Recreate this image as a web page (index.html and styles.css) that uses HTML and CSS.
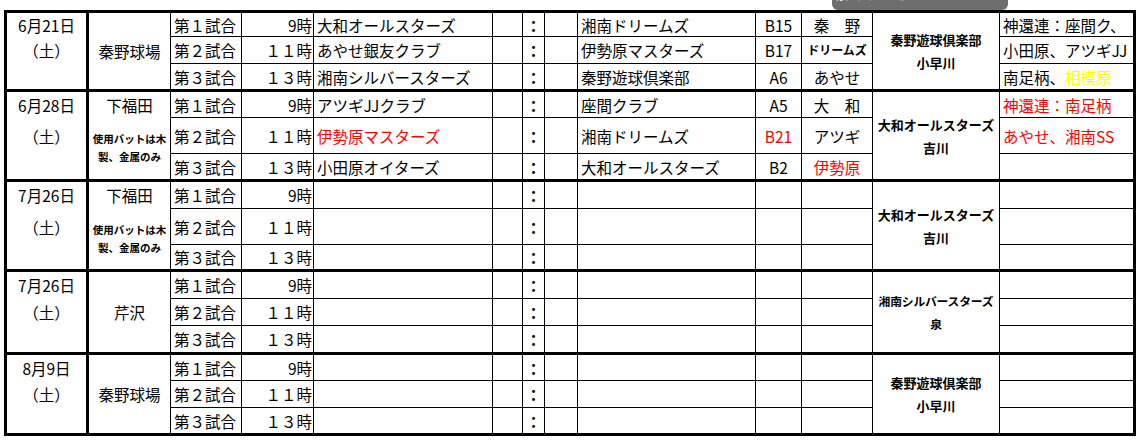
FILE: index.html
```html
<!DOCTYPE html>
<html lang="ja">
<head>
<meta charset="utf-8">
<title>日程表</title>
<link rel="stylesheet" href="styles.css">
</head>
<body>
<div class="sheet">
  <div class="tip">泉（2チーム）</div>
  <table class="grid">
    <colgroup>
      <col class="c-date"><col class="c-venue"><col class="c-game"><col class="c-time">
      <col class="c-team"><col class="c-sc1"><col class="c-colon"><col class="c-sc2">
      <col class="c-team2"><col class="c-field"><col class="c-ref"><col class="c-ump"><col class="c-note">
    </colgroup>
    <tbody>
      <!-- block 1 -->
      <tr class="first r25">
        <td class="date">6月21日</td>
        <td class="venue" rowspan="3">秦野球場</td>
        <td class="game">第１試合</td><td class="time">9時</td>
        <td class="team">大和オールスターズ</td><td></td><td class="colon">：</td><td></td>
        <td class="team">湘南ドリームズ</td><td class="field">B15</td><td class="ref">秦　野</td>
        <td class="ump" rowspan="3">秦野遊球倶楽部<br>小早川</td>
        <td class="note">神還連：座間ク、</td>
      </tr>
      <tr class="r27">
        <td class="date">（土）</td>
        <td class="game">第２試合</td><td class="time">１１時</td>
        <td class="team">あやせ銀友クラブ</td><td></td><td class="colon">：</td><td></td>
        <td class="team">伊勢原マスターズ</td><td class="field">B17</td><td class="ref small">ドリームズ</td>
        <td class="note">小田原、アツギJJ</td>
      </tr>
      <tr class="r27">
        <td class="date"></td>
        <td class="game">第３試合</td><td class="time">１３時</td>
        <td class="team">湘南シルバースターズ</td><td></td><td class="colon">：</td><td></td>
        <td class="team">秦野遊球倶楽部</td><td class="field">A6</td><td class="ref">あやせ</td>
        <td class="note">南足柄、<span class="yellow">相模原</span></td>
      </tr>
      <!-- block 2 -->
      <tr class="first r27">
        <td class="date">6月28日</td>
        <td class="venue venue-top">下福田</td>
        <td class="game">第１試合</td><td class="time">9時</td>
        <td class="team">アツギJJクラブ</td><td></td><td class="colon">：</td><td></td>
        <td class="team">座間クラブ</td><td class="field">A5</td><td class="ref">大　和</td>
        <td class="ump" rowspan="3">大和オールスターズ<br>吉川</td>
        <td class="note red">神還連：南足柄</td>
      </tr>
      <tr class="r36">
        <td class="date">（土）</td>
        <td class="venue venue-note" rowspan="2">使用バットは木<br>製、金属のみ</td>
        <td class="game">第２試合</td><td class="time">１１時</td>
        <td class="team red">伊勢原マスターズ</td><td></td><td class="colon">：</td><td></td>
        <td class="team">湘南ドリームズ</td><td class="field red">B21</td><td class="ref">アツギ</td>
        <td class="note red">あやせ、湘南SS</td>
      </tr>
      <tr class="r27">
        <td class="date"></td>
        <td class="game">第３試合</td><td class="time">１３時</td>
        <td class="team">小田原オイターズ</td><td></td><td class="colon">：</td><td></td>
        <td class="team">大和オールスターズ</td><td class="field">B2</td><td class="ref red">伊勢原</td>
        <td class="note"></td>
      </tr>
      <!-- block 3 -->
      <tr class="first r28">
        <td class="date">7月26日</td>
        <td class="venue venue-top">下福田</td>
        <td class="game">第１試合</td><td class="time">9時</td>
        <td class="team"></td><td></td><td class="colon">：</td><td></td>
        <td class="team"></td><td class="field"></td><td class="ref"></td>
        <td class="ump" rowspan="3">大和オールスターズ<br>吉川</td>
        <td class="note"></td>
      </tr>
      <tr class="r36">
        <td class="date">（土）</td>
        <td class="venue venue-note" rowspan="2">使用バットは木<br>製、金属のみ</td>
        <td class="game">第２試合</td><td class="time">１１時</td>
        <td class="team"></td><td></td><td class="colon">：</td><td></td>
        <td class="team"></td><td class="field"></td><td class="ref"></td>
        <td class="note"></td>
      </tr>
      <tr class="r26">
        <td class="date"></td>
        <td class="game">第３試合</td><td class="time">１３時</td>
        <td class="team"></td><td></td><td class="colon">：</td><td></td>
        <td class="team"></td><td class="field"></td><td class="ref"></td>
        <td class="note"></td>
      </tr>
      <!-- block 4 -->
      <tr class="first r28">
        <td class="date">7月26日</td>
        <td class="venue" rowspan="3">芹沢</td>
        <td class="game">第１試合</td><td class="time">9時</td>
        <td class="team"></td><td></td><td class="colon">：</td><td></td>
        <td class="team"></td><td class="field"></td><td class="ref"></td>
        <td class="ump ump-narrow" rowspan="3">湘南シルバースターズ<br>泉</td>
        <td class="note"></td>
      </tr>
      <tr class="r27">
        <td class="date">（土）</td>
        <td class="game">第２試合</td><td class="time">１１時</td>
        <td class="team"></td><td></td><td class="colon">：</td><td></td>
        <td class="team"></td><td class="field"></td><td class="ref"></td>
        <td class="note"></td>
      </tr>
      <tr class="r28">
        <td class="date"></td>
        <td class="game">第３試合</td><td class="time">１３時</td>
        <td class="team"></td><td></td><td class="colon">：</td><td></td>
        <td class="team"></td><td class="field"></td><td class="ref"></td>
        <td class="note"></td>
      </tr>
      <!-- block 5 -->
      <tr class="first r27">
        <td class="date">8月9日</td>
        <td class="venue" rowspan="3">秦野球場</td>
        <td class="game">第１試合</td><td class="time">9時</td>
        <td class="team"></td><td></td><td class="colon">：</td><td></td>
        <td class="team"></td><td class="field"></td><td class="ref"></td>
        <td class="ump" rowspan="3">秦野遊球倶楽部<br>小早川</td>
        <td class="note"></td>
      </tr>
      <tr class="r27">
        <td class="date">（土）</td>
        <td class="game">第２試合</td><td class="time">１１時</td>
        <td class="team"></td><td></td><td class="colon">：</td><td></td>
        <td class="team"></td><td class="field"></td><td class="ref"></td>
        <td class="note"></td>
      </tr>
      <tr class="r27">
        <td class="date"></td>
        <td class="game">第３試合</td><td class="time">１３時</td>
        <td class="team"></td><td></td><td class="colon">：</td><td></td>
        <td class="team"></td><td class="field"></td><td class="ref"></td>
        <td class="note"></td>
      </tr>
    </tbody>
  </table>
</div>
</body>
</html>
```

FILE: styles.css
```css
html, body {
  margin: 0;
  padding: 0;
  background: #fff;
}

body {
  font-family: "Noto Sans CJK JP", "Noto Sans", sans-serif;
  color: #000;
}

.sheet {
  position: relative;
  padding: 10px 0 0 4px;
}

.tip {
  position: absolute;
  left: 832px;
  top: -14px;
  width: 176px;
  height: 24px;
  padding-left: 4px;
  padding-top: 3px;
  background: #6e6e6e;
  border-radius: 6px;
  color: #fff;
  font-size: 12px;
  line-height: 12px;
  box-sizing: border-box;
  z-index: 2;
}

.grid {
  border-collapse: collapse;
  table-layout: fixed;
  width: 1132px;
  border: 3px solid #000;
  font-size: 15.5px;
}

.c-date { width: 82px; }
.c-venue { width: 83px; }
.c-game { width: 71px; }
.c-time { width: 72px; }
.c-team { width: 179px; }
.c-sc1 { width: 30px; }
.c-colon { width: 22px; }
.c-sc2 { width: 33px; }
.c-team2 { width: 178px; }
.c-field { width: 46px; }
.c-ref { width: 71px; }
.c-ump { width: 127px; }
.c-note { width: 135px; }

.grid td {
  border: 1px solid #000;
  padding: 0 2px;
  line-height: 20px;
  white-space: nowrap;
  overflow: hidden;
  vertical-align: middle;
}

.r25 { height: 25px; }
.r26 { height: 26px; }
.r27 { height: 27px; }
.r28 { height: 28px; }
.r36 { height: 36px; }

.grid td.date {
  border-top: none;
  border-bottom: none;
  border-right: 3px solid #000;
  text-align: center;
}

.grid tr.first td {
  border-top: 3px solid #000;
}

.grid td.venue {
  text-align: center;
}

.grid td.venue-top {
  border-bottom: none;
}

.grid td.venue-note {
  border-top: none;
  font-size: 10.5px;
  font-weight: bold;
  line-height: 18px;
}

.game {
  text-align: left;
}

.grid td.game,
.grid td.team,
.grid td.note {
  padding-left: 3px;
}

.grid td.time {
  text-align: right;
  padding-right: 1px;
}

.colon {
  text-align: center;
  font-weight: bold;
}

.grid td.colon {
  padding: 0;
}

.field,
.ref {
  text-align: center;
}

.grid td.ref.small {
  font-size: 12px;
  font-weight: bold;
}

.grid td.ump {
  text-align: center;
  font-size: 13px;
  font-weight: bold;
  line-height: 23px;
}

.grid td.ump-narrow {
  font-size: 11.8px;
  letter-spacing: -0.2px;
}

.red {
  color: #ff0000;
}

.yellow {
  color: #ffff00;
}
```
